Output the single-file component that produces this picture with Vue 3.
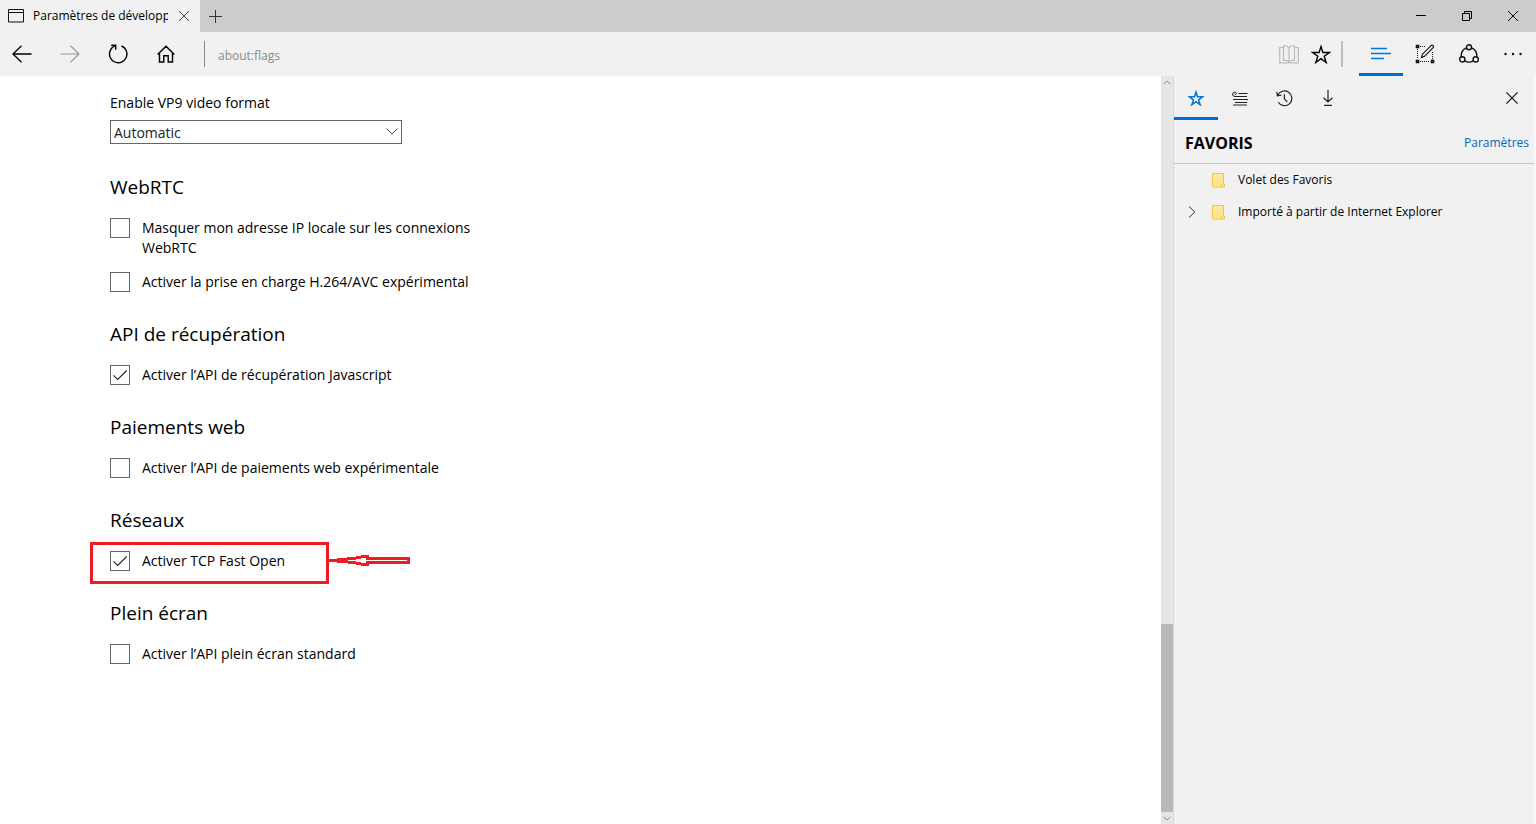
<script setup>
import { ref } from 'vue'

const address = ref('about:flags')
const videoFormat = ref('Automatic')

const sections = ref([
  {
    title: 'WebRTC',
    flags: [
      { id: 'hide-ip', label: 'Masquer mon adresse IP locale sur les connexions WebRTC', on: false },
      { id: 'h264', label: 'Activer la prise en charge H.264/AVC expérimental', on: false },
    ],
  },
  {
    title: 'API de récupération',
    flags: [{ id: 'fetch', label: 'Activer l’API de récupération Javascript', on: true }],
  },
  {
    title: 'Paiements web',
    flags: [{ id: 'payments', label: 'Activer l’API de paiements web expérimentale', on: false }],
  },
  {
    title: 'Réseaux',
    flags: [{ id: 'tcp', label: 'Activer TCP Fast Open', on: true, marked: true }],
  },
  {
    title: 'Plein écran',
    flags: [{ id: 'fullscreen', label: 'Activer l’API plein écran standard', on: false }],
  },
])

const folders = [
  { name: 'Volet des Favoris', expandable: false },
  { name: 'Importé à partir de Internet Explorer', expandable: true },
]
</script>

<template>
  <div class="browser">
    <header class="titlebar">
      <div class="tab">
        <svg class="tab-icon" width="16" height="14" viewBox="0 0 16 14" fill="none" stroke="#111">
          <path d="M.5 .5h15v12.500h-15zM.5 3.500h15" />
        </svg>
        <span class="tab-title">Paramètres de développeur</span>
        <button class="tab-close" aria-label="Fermer l’onglet">
          <svg width="12" height="12" viewBox="0 0 12 12" fill="none" stroke="#444"><path d="M1 1l10 10M11 1L1 11" /></svg>
        </button>
      </div>
      <button class="new-tab" aria-label="Nouvel onglet">
        <svg width="13" height="13" viewBox="0 0 13 13" fill="none" stroke="#333"><path d="M6.500 0v13M0 6.500h13" /></svg>
      </button>
      <div class="window-buttons">
        <button aria-label="Réduire">
          <svg width="10" height="10" viewBox="0 0 10 10" stroke="#000"><path d="M0 4.500h10" /></svg>
        </button>
        <button aria-label="Restaurer">
          <svg width="10" height="10" viewBox="0 0 10 10" fill="none" stroke="#000"><path d="M.5 2.500h7v7h-7zM2.500 2.500v-2h7v7h-2" /></svg>
        </button>
        <button aria-label="Fermer">
          <svg width="10" height="10" viewBox="0 0 10 10" fill="none" stroke="#000"><path d="M0 0l10 10M10 0L0 10" /></svg>
        </button>
      </div>
    </header>

    <nav class="toolbar">
      <div class="nav-buttons">
        <button aria-label="Précédent">
          <svg width="20" height="18" viewBox="0 0 20 18" fill="none" stroke="#000" stroke-width="1.300"><path d="M19.500 9H1M9.500 .7L1 9l8.500 8.300" /></svg>
        </button>
        <button aria-label="Suivant">
          <svg width="20" height="18" viewBox="0 0 20 18" fill="none" stroke="#999" stroke-width="1.200"><path d="M.5 9H19M10.500 .7L19 9l-8.500 8.300" /></svg>
        </button>
        <button aria-label="Actualiser">
          <svg width="20" height="20" viewBox="0 0 20 20" fill="none" stroke="#000" stroke-width="1.400"><path d="M13.500 2A8.700 8.700 0 1 1 7.200 1.900M3.200 1.200h4.500v4.500" /></svg>
        </button>
        <button aria-label="Accueil">
          <svg width="18" height="18" viewBox="0 0 18 18" fill="none" stroke="#000" stroke-width="1.400"><path d="M.6 9.600L9 1.300l8.400 8.300M2.500 8.300v8.700h4.300v-6.300h4.400v6.300h4.300V8.300" /></svg>
        </button>
      </div>
      <input v-model="address" class="address" type="text" aria-label="Adresse" />
      <div class="page-buttons">
        <button aria-label="Mode Lecture">
          <svg width="20" height="19" viewBox="0 0 20 19" fill="none" stroke="#bcbcbc" stroke-width="1.200"><path d="M10 2.500C8.500 .9 6.500 .7 4.500 .9v14.600c2.200-.3 4 0 5.500 1.400 1.500-1.400 3.300-1.700 5.500-1.400V.9C13.500 .7 11.500 .9 10 2.500zM10 2.500V17M4.500 2.500H.7v15.300h18.600V2.500h-3.800" /></svg>
        </button>
        <button aria-label="Ajouter aux favoris">
          <svg width="20" height="20" viewBox="0 0 20 20" fill="none" stroke="#000" stroke-width="1.400"><path d="M10 2.500l1.900 6h6.500l-5.200 3.800 2 6.200-5.200-3.800-5.200 3.800 2-6.200-5.200-3.800h6.500z" /></svg>
        </button>
      </div>
      <div class="tool-buttons">
        <button class="active" aria-label="Hub">
          <svg width="20" height="14" viewBox="0 0 20 14" stroke="#0078d7" stroke-width="1.300"><path d="M0 1.500h16M0 6.500h20M0 11.500h13" /></svg>
        </button>
        <button aria-label="Créer une note web">
          <svg width="20" height="20" viewBox="0 0 20 20" fill="none" stroke="#111">
            <path d="M5 2.500h6M2.500 5v10M5 17.500h10M17.500 8v7" stroke-dasharray="1 1" />
            <path d="M1.500 1.500h2v2h-2zM1.500 16.500h2v2h-2zM16.500 16.500h2v2h-2z" stroke-width="1.600" />
            <path d="M6.500 13.500l1-3.300L16 1.600q1.200-.9 2.100 0 .8 .9 0 2.100l-8.500 8.600z" stroke-width="1.200" />
          </svg>
        </button>
        <button aria-label="Partager">
          <svg width="20" height="20" viewBox="0 0 20 20" fill="none" stroke="#111" stroke-width="1.400">
            <path d="M7.500 3.800A7.800 7.800 0 0 0 2.500 13M12.500 3.800A7.800 7.800 0 0 1 17.500 13M5.800 16.800a7.800 7.800 0 0 0 8.400 0" />
            <circle cx="10" cy="3.200" r="2.500" /><circle cx="3.300" cy="15.400" r="2.600" /><circle cx="16.700" cy="15.400" r="2.600" />
          </svg>
        </button>
        <button aria-label="Plus">
          <svg width="18" height="4" viewBox="0 0 18 4" fill="#111"><circle cx="1.500" cy="2" r="1.200" /><circle cx="9" cy="2" r="1.200" /><circle cx="16.500" cy="2" r="1.200" /></svg>
        </button>
      </div>
    </nav>

    <div class="body">
      <main class="flags">
        <div class="field">
          <label for="vp9">Enable VP9 video format</label>
          <div class="select">
            <select id="vp9" v-model="videoFormat">
              <option>Automatic</option>
            </select>
            <svg width="12" height="7" viewBox="0 0 12 7" fill="none" stroke="#444"><path d="M.5 .5L6 6l5.500-5.500" /></svg>
          </div>
        </div>

        <section v-for="section in sections" :key="section.title">
          <h2>{{ section.title }}</h2>
          <div class="flag-list">
            <div v-for="flag in section.flags" :key="flag.id" class="flag">
              <span class="check">
                <input :id="flag.id" v-model="flag.on" type="checkbox" />
                <svg v-if="flag.on" width="20" height="20" viewBox="0 0 20 20" fill="none" stroke="#222" stroke-width="1.100"><path d="M3.500 10.300l4.200 4.200 9-9" /></svg>
              </span>
              <label :for="flag.id">{{ flag.label }}</label>
              <span v-if="flag.marked" class="marker">
                <svg width="81" height="12" viewBox="0 0 81 12" fill="#fff" stroke="#ed1c24" stroke-width="3" shape-rendering="crispEdges">
                  <path d="M0 5.500h4L13 4.500 24 3.500l11-2h3v2h41.500v4H38v2h-3l-11-2L13 6.500 4 5.500" />
                </svg>
              </span>
            </div>
          </div>
        </section>
      </main>

      <div class="scrollbar">
        <button aria-label="Défiler vers le haut">
          <svg width="8" height="5" viewBox="0 0 8 5" fill="none" stroke="#888"><path d="M.7 4.200L4 .9l3.300 3.300" /></svg>
        </button>
        <div class="track"><div class="thumb"></div></div>
        <button aria-label="Défiler vers le bas">
          <svg width="8" height="5" viewBox="0 0 8 5" fill="none" stroke="#888"><path d="M.7 .8L4 4.100 7.300 .8" /></svg>
        </button>
      </div>

      <aside class="hub">
        <div class="hub-tabs">
          <button class="active" aria-label="Favoris">
            <svg width="16" height="16" viewBox="0 0 20 20" fill="none" stroke="#0078d7" stroke-width="1.900"><path d="M10 2.500l1.900 6h6.500l-5.200 3.800 2 6.200-5.200-3.800-5.200 3.800 2-6.200-5.200-3.800h6.500z" /></svg>
          </button>
          <button aria-label="Liste de lecture">
            <svg width="16" height="15" viewBox="0 0 16 15" fill="none" stroke="#222"><path d="M6.500 2.500h9M3 5.500h12M1 8.500h15M3 11.500h12M1 14h14M3 5.500C.5 5.500 0 3 1.200 1.800 2.500 .5 4.500 1.200 4.300 2.600 4.100 3.700 2.700 3.600 2.700 2.700" /></svg>
          </button>
          <button aria-label="Historique">
            <svg width="17" height="17" viewBox="0 0 17 17" fill="none" stroke="#222" stroke-width="1.200"><path d="M1.600 5.500A7.400 7.400 0 1 1 2.200 12.300M.8 1.800l.6 4 4-.6M8.400 4.300v4.500l2.900 3" /></svg>
          </button>
          <button aria-label="Téléchargements">
            <svg width="12" height="16" viewBox="0 0 12 16" fill="none" stroke="#222" stroke-width="1.200"><path d="M6 0v12M1.500 7.700L6 12l4.500-4.300M2 15.300h8" /></svg>
          </button>
          <button class="hub-close" aria-label="Fermer le volet">
            <svg width="12" height="12" viewBox="0 0 12 12" fill="none" stroke="#111" stroke-width="1.200"><path d="M.4 .4l11.200 11.200M11.600 .4L.4 11.600" /></svg>
          </button>
        </div>
        <div class="hub-head">
          <h1>FAVORIS</h1>
          <a href="#parametres">Paramètres</a>
        </div>
        <ul class="folders">
          <li v-for="folder in folders" :key="folder.name">
            <span class="expander">
              <button v-if="folder.expandable" aria-label="Développer">
                <svg width="8" height="12" viewBox="0 0 8 12" fill="none" stroke="#333"><path d="M1 .5L6.800 6 1 11.500" /></svg>
              </button>
            </span>
            <svg width="13" height="15" viewBox="0 0 13 15" stroke="#f0c44c"><path d="M.5 .5h11v10.500h1v3H.5z" fill="#ffe793" /><path d="M9.500 14v-3h2" fill="none" /></svg>
            <span class="folder-name">{{ folder.name }}</span>
          </li>
        </ul>
      </aside>
    </div>
  </div>
</template>

<style>
body {
  margin: 0;
}
</style>

<style scoped>
.browser {
  display: flex;
  flex-direction: column;
  min-height: 100vh;
  background: #fff;
  color: #000;
  font-family: "Open Sans", "Noto Sans", sans-serif;
  font-size: 14px;
  line-height: 20px;
}
button {
  display: flex;
  align-items: center;
  justify-content: center;
  padding: 0;
  border: 0;
  background: none;
}
svg {
  flex: none;
}

/* Title bar */
.titlebar {
  display: flex;
  height: 32px;
  background: #ccc;
}
.tab {
  display: flex;
  align-items: center;
  box-sizing: border-box;
  width: 200px;
  padding: 0 6px 0 8px;
  background: #f1f1f1;
}
.tab-title {
  flex: 1;
  margin: 0 6px 0 9px;
  overflow: hidden;
  white-space: nowrap;
  font-size: 12px;
}
.tab-close {
  width: 20px;
  height: 20px;
}
.new-tab {
  width: 30px;
}
.window-buttons {
  display: flex;
  margin-left: auto;
}
.window-buttons button {
  width: 46px;
}

/* Toolbar */
.toolbar {
  display: flex;
  align-items: center;
  height: 44px;
  padding-right: 1px;
  background: #f1f1f1;
}
.nav-buttons {
  display: flex;
  gap: 4px;
}
.nav-buttons button,
.tool-buttons button,
.hub-tabs button {
  box-sizing: border-box;
  width: 44px;
  height: 44px;
}
.address {
  flex: 1;
  min-width: 0;
  height: 26px;
  box-sizing: border-box;
  margin-left: 16px;
  padding: 2px 0 0 13px;
  border: 0;
  border-left: 1px solid #8a8a8a;
  background: none;
  color: #8a8a8a;
  font: 12px "Open Sans", "Noto Sans", sans-serif;
}
.page-buttons {
  display: flex;
  padding-right: 4px;
  border-right: 2px solid #bdbdbd;
}
.page-buttons button {
  width: 32px;
  height: 26px;
}
.tool-buttons {
  display: flex;
  margin-left: 16px;
}
.tool-buttons .active,
.hub-tabs .active {
  padding-top: 3px;
  border-bottom: 3px solid #006cd8;
}

/* Page */
.body {
  display: flex;
  flex: 1;
}
.flags {
  flex: 1;
  padding: 17px 0 0 110px;
}
.field {
  margin-bottom: 29px;
}
.select {
  position: relative;
  width: 292px;
  margin-top: 7px;
}
.select select {
  display: block;
  width: 100%;
  height: 24px;
  padding: 0 3px;
  border: 1px solid #666;
  border-radius: 0;
  appearance: none;
  background: #fff;
  color: #222;
  font: 14px "Open Sans", "Noto Sans", sans-serif;
}
.select svg {
  position: absolute;
  top: 8px;
  right: 4px;
  pointer-events: none;
}
section {
  margin-bottom: 28px;
}
h2 {
  margin: 0 0 17px;
  font-size: 19px;
  font-weight: 400;
  line-height: 28px;
}
.flag-list {
  display: flex;
  flex-direction: column;
  gap: 14px;
}
.flag {
  position: relative;
  display: flex;
  gap: 12px;
  width: 380px;
}
.check {
  position: relative;
  flex: none;
  height: 20px;
}
.check input {
  display: block;
  box-sizing: border-box;
  width: 20px;
  height: 20px;
  margin: 0;
  border: 1px solid #666;
  appearance: none;
  background: #fff;
}
.check svg {
  position: absolute;
  inset: 0;
  pointer-events: none;
}
.marker {
  position: absolute;
  top: -9px;
  left: -20px;
  box-sizing: border-box;
  width: 239px;
  height: 42px;
  border: 3px solid #ed1c24;
  pointer-events: none;
}
.marker svg {
  position: absolute;
  top: 10px;
  left: 100%;
  margin-left: 3px;
}

/* Scrollbar */
.scrollbar {
  display: flex;
  flex-direction: column;
  box-sizing: border-box;
  width: 13px;
  border-right: 1px solid #d9d9d9;
  background: #e6e6e6;
}
.scrollbar button {
  height: 12px;
}
.track {
  display: flex;
  flex: 1;
  flex-direction: column;
  justify-content: flex-end;
}
.thumb {
  height: 26%;
  background: #b9b9b9;
}

/* Hub */
.hub {
  box-sizing: border-box;
  width: 362px;
  border-right: 2px solid #f8f8f8;
  background: #f1f1f1;
}
.hub-tabs {
  display: flex;
}
.hub-tabs .hub-close {
  margin-left: auto;
}
.hub-head {
  display: flex;
  align-items: center;
  justify-content: space-between;
  box-sizing: border-box;
  height: 44px;
  padding: 2px 5px 0 11px;
  border-bottom: 1px solid #c8c8c8;
}
.hub-head h1 {
  margin: 0;
  font-size: 16px;
  font-weight: 700;
}
.hub-head a {
  color: #0067c0;
  font-size: 12px;
  text-decoration: none;
}
.folders {
  margin: 0;
  padding: 0;
  list-style: none;
  font-size: 12px;
}
.folders li {
  display: flex;
  align-items: center;
  height: 32px;
}
.expander {
  width: 38px;
}
.expander button {
  width: 36px;
  height: 32px;
}
.folder-name {
  margin-left: 13px;
}
</style>
